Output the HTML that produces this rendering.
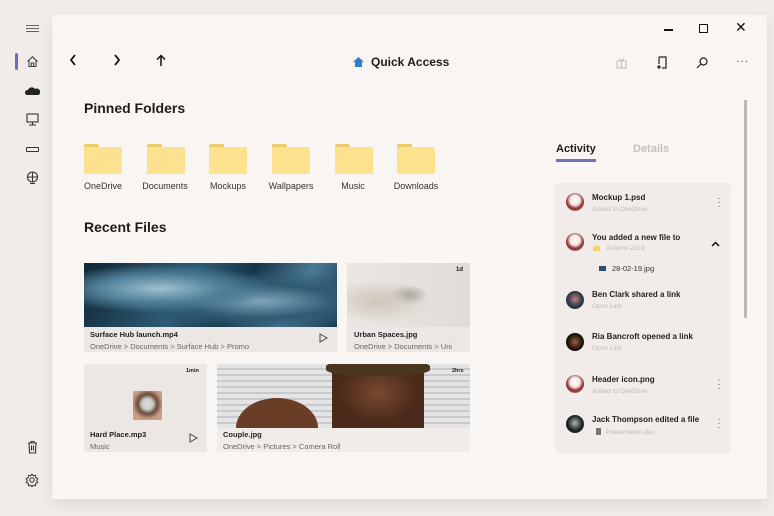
<!DOCTYPE html>
<html><head><meta charset="utf-8"><style>
*{margin:0;padding:0;box-sizing:border-box}
body{width:774px;height:516px;background:#f1ece9;font-family:"Liberation Sans",sans-serif;position:relative;overflow:hidden;color:#1c1c1c}
.abs{position:absolute}
.win{left:52px;top:15px;width:715px;height:484px;background:#f9f5f2;box-shadow:0 6px 14px rgba(0,0,0,.08)}
.fold{position:absolute;top:144px;width:38px;height:30px}
.fold .tab{position:absolute;left:0;top:0;width:15px;height:4px;background:#e9cc6c;border-radius:2px 2px 0 0}
.fold .body{position:absolute;left:0;top:3px;width:38px;height:27px;background:#fce28e;border-radius:1px}
.flab{position:absolute;top:181px;font-size:9px;color:#333;text-align:center;width:60px}
.card{position:absolute;background:#ece7e4}
.cap{position:absolute;font-size:7.5px}
.cap b{display:block;font-size:7.5px;color:#222}
.cap span{display:block;color:#666;margin-top:3px}
.av{position:absolute;left:566px;width:18px;height:18px;border-radius:50%}
.at{position:absolute;left:592px;font-size:8px;font-weight:bold;color:#222}
.as{position:absolute;left:592px;font-size:6.5px;color:#bbb}
.dots{position:absolute;left:717px;font-size:10px;color:#666;line-height:4px;width:4px;text-align:center}
</style></head><body>
<div class="abs win"></div>
<!-- sidebar -->
<div class="abs" style="left:26px;top:25px;width:13px;height:1px;background:#666;box-shadow:0 3px 0 #666,0 6px 0 #666"></div>
<div class="abs" style="left:15px;top:53px;width:3px;height:17px;background:#6b6fb5;border-radius:2px"></div>
<svg class="abs" style="left:26px;top:55px" width="13" height="13" viewBox="0 0 13 13" fill="none" stroke="#444" stroke-width="1.1"><path d="M1.5 6.5L6.5 1.8 11.5 6.5M3 5.5V11.5H10V5.5M5.3 11.5V8H7.7V11.5"/></svg>
<svg class="abs" style="left:25px;top:86px" width="15" height="9" viewBox="0 0 15 9"><path d="M2 9A2.5 2.5 0 0 1 3 4 4 4 0 0 1 10 3 3 3 0 0 1 13.5 9Z" fill="#222"/></svg>
<svg class="abs" style="left:26px;top:113px" width="13" height="13" viewBox="0 0 13 13" fill="none" stroke="#333" stroke-width="1.1"><rect x="1" y="1" width="11" height="8"/><path d="M6.5 9V11.5M3 12H10"/></svg>
<div class="abs" style="left:26px;top:147px;width:13px;height:5px;border:1.2px solid #333;border-radius:1px"></div>
<svg class="abs" style="left:26px;top:171px" width="13" height="14" viewBox="0 0 13 14" fill="none" stroke="#333" stroke-width="1.1"><circle cx="6.5" cy="6" r="5"/><path d="M1.5 6H11.5M6.5 1V11M4 12.5H9"/></svg>
<svg class="abs" style="left:27px;top:440px" width="11" height="14" viewBox="0 0 11 14" fill="none" stroke="#333" stroke-width="1.1"><path d="M1 3H10M4 3V1.5H7V3M2 3L2.5 13H8.5L9 3M4.5 5.5V10.5M6.5 5.5V10.5"/></svg>
<svg class="abs" style="left:25px;top:473px" width="14" height="14" viewBox="0 0 14 14" fill="none" stroke="#444" stroke-width="1.1"><circle cx="7" cy="7" r="2.2"/><path d="M7 1L8.2 2.8 10.5 2.3 10.7 4.5 12.8 5.6 11.6 7.5 12.8 9.4 10.7 10.5 10.5 12.7 8.2 12.2 7 14 5.8 12.2 3.5 12.7 3.3 10.5 1.2 9.4 2.4 7.5 1.2 5.6 3.3 4.5 3.5 2.3 5.8 2.8Z"/></svg>
<!-- nav -->
<svg class="abs" style="left:69px;top:54px" width="8" height="12" viewBox="0 0 8 12" fill="none" stroke="#111" stroke-width="1.8"><path d="M6 1L2 6 6 11"/></svg>
<svg class="abs" style="left:113px;top:54px" width="8" height="12" viewBox="0 0 8 12" fill="none" stroke="#111" stroke-width="1.8"><path d="M2 1L6 6 2 11"/></svg>
<svg class="abs" style="left:156px;top:54px" width="10" height="13" viewBox="0 0 10 13" fill="none" stroke="#111" stroke-width="1.5"><path d="M5 12V1.5M1 5.5L5 1.5 9 5.5"/></svg>
<svg class="abs" style="left:353px;top:57px" width="11" height="10" viewBox="0 0 11 10"><path d="M5.5 0L11 5H9V10H2V5H0Z" fill="#2a7fd4"/></svg>
<div class="abs" style="left:371px;top:55px;font-size:12px;font-weight:bold">Quick Access</div>
<!-- window controls -->
<div class="abs" style="left:664px;top:29px;width:9px;height:1.5px;background:#111"></div>
<div class="abs" style="left:699px;top:24px;width:9px;height:9px;border:1.5px solid #111"></div>
<div class="abs" style="left:735px;top:19px;font-size:14px;color:#111">✕</div>
<svg class="abs" style="left:616px;top:57px" width="11" height="12" viewBox="0 0 11 12" fill="none" stroke="#bbb" stroke-width="1"><rect x="1" y="4" width="9" height="7"/><path d="M5.5 4V11M3 1.5L5.5 4 8 1.5"/></svg>
<svg class="abs" style="left:656px;top:56px" width="12" height="14" viewBox="0 0 12 14" fill="none" stroke="#222" stroke-width="1.2"><path d="M3 1H10V12H6M3 1V8M1 11H5M3 9V13"/></svg>
<svg class="abs" style="left:696px;top:57px" width="12" height="12" viewBox="0 0 12 12" fill="none" stroke="#222" stroke-width="1.2"><circle cx="7.5" cy="4.5" r="3.5"/><path d="M5 7L1 11"/></svg>
<div class="abs" style="left:736px;top:56px;font-size:10px;color:#333;letter-spacing:1px">···</div>
<!-- pinned -->
<div class="abs" style="left:84px;top:100px;font-size:14px;font-weight:bold">Pinned Folders</div>
<div class="fold" style="left:84px"><div class="tab"></div><div class="body"></div></div>
<div class="fold" style="left:147px"><div class="tab"></div><div class="body"></div></div>
<div class="fold" style="left:209px"><div class="tab"></div><div class="body"></div></div>
<div class="fold" style="left:272px"><div class="tab"></div><div class="body"></div></div>
<div class="fold" style="left:335px"><div class="tab"></div><div class="body"></div></div>
<div class="fold" style="left:397px"><div class="tab"></div><div class="body"></div></div>
<div class="flab" style="left:73px">OneDrive</div>
<div class="flab" style="left:135px">Documents</div>
<div class="flab" style="left:198px">Mockups</div>
<div class="flab" style="left:261px">Wallpapers</div>
<div class="flab" style="left:323px">Music</div>
<div class="flab" style="left:386px">Downloads</div>
<div class="abs" style="left:84px;top:219px;font-size:14px;font-weight:bold">Recent Files</div>
<!-- cards -->
<div class="card" style="left:84px;top:263px;width:253px;height:89px"></div>
<div class="abs" style="left:84px;top:263px;width:253px;height:64px;background:radial-gradient(ellipse at 30% 40%,#9dc0d0 0,#4f7f98 25%,transparent 45%),radial-gradient(ellipse at 70% 60%,#7fa6bb 0,#2f5a72 30%,transparent 55%),linear-gradient(120deg,#0f2533,#2d5c75 40%,#163447 60%,#4a7a93 80%,#1a3a4e)"></div>
<div class="cap" style="left:90px;top:330px"><b>Surface Hub launch.mp4</b><span>OneDrive &gt; Documents &gt; Surface Hub &gt; Promo</span></div>
<svg class="abs" style="left:319px;top:333px" width="9" height="10" viewBox="0 0 9 10" fill="none" stroke="#444"><path d="M1 1L8 5 1 9Z"/></svg>
<div class="card" style="left:347px;top:263px;width:123px;height:89px"></div>
<div class="abs" style="left:347px;top:263px;width:123px;height:64px;background:radial-gradient(ellipse at 25% 60%,#cfc5bb 0,transparent 40%),radial-gradient(ellipse at 50% 50%,#9c9a98 0,transparent 22%),linear-gradient(90deg,#ebe6e2,#e0dbd7)"></div>
<div class="abs" style="left:456px;top:267px;font-size:6px;font-weight:bold">1d</div>
<div class="cap" style="left:354px;top:330px"><b>Urban Spaces.jpg</b><span>OneDrive &gt; Documents &gt; Uni</span></div>
<div class="card" style="left:84px;top:364px;width:123px;height:88px"></div>
<div class="abs" style="left:186px;top:368px;font-size:5.5px;font-weight:bold">1min</div>
<div class="abs" style="left:133px;top:391px;width:29px;height:29px;background:radial-gradient(circle at 50% 45%,#ddd 0,#ccc 25%,#6a4a3a 45%,#c79d85 70%);border-radius:2px"></div>
<div class="cap" style="left:90px;top:430px"><b>Hard Place.mp3</b><span>Music</span></div>
<svg class="abs" style="left:189px;top:433px" width="9" height="10" viewBox="0 0 9 10" fill="none" stroke="#444"><path d="M1 1L8 5 1 9Z"/></svg>
<div class="card" style="left:217px;top:364px;width:253px;height:88px;background:#f0ece9"></div>
<div class="abs" style="left:217px;top:364px;width:253px;height:64px;overflow:hidden;background:repeating-linear-gradient(180deg,#e5e4e4 0 4px,#c9c9cb 4px 6px)">
 <div class="abs" style="left:19px;top:34px;width:82px;height:60px;border-radius:50% 50% 0 0;background:#6a3e26"></div>
 <div class="abs" style="left:115px;top:0;width:92px;height:64px;background:radial-gradient(ellipse at 50% 45%,#7a4a30 0,#4a2a1a 60%)"></div>
 <div class="abs" style="left:109px;top:-4px;width:104px;height:16px;background:#4a3520;border-radius:40%"></div>
</div>
<div class="abs" style="left:452px;top:368px;font-size:5.5px;font-weight:bold">2hrs</div>
<div class="cap" style="left:223px;top:430px"><b>Couple.jpg</b><span>OneDrive &gt; Pictures &gt; Camera Roll</span></div>
<!-- right panel -->
<div class="abs" style="left:556px;top:143px;font-size:11px;font-weight:bold">Activity</div>
<div class="abs" style="left:556px;top:159px;width:40px;height:3px;background:#6e73b8"></div>
<div class="abs" style="left:633px;top:143px;font-size:11px;font-weight:bold;color:#c5c1be">Details</div>
<div class="abs" style="left:744px;top:100px;width:3px;height:218px;background:#bdb8b5"></div>
<div class="abs" style="left:555px;top:183px;width:176px;height:270px;background:#f1ece9;border-radius:3px"></div>
<div class="av" style="top:193px;background:radial-gradient(circle at 50% 40%,#fff 0,#f4e6e6 35%,#8a2a2a 60%,#d9c0c0)"></div>
<div class="at" style="top:193px">Mockup 1.psd</div><div class="as" style="top:206px">Added to OneDrive</div>
<div class="dots" style="top:197px">·<br>·<br>·</div>
<div class="av" style="top:233px;background:radial-gradient(circle at 50% 40%,#fff 0,#f4e6e6 35%,#8a2a2a 60%,#d9c0c0)"></div>
<div class="at" style="top:233px">You added a new file to</div>
<div class="abs" style="left:593px;top:246px;width:7px;height:5px;background:#f5d36a"></div>
<div class="as" style="left:606px;top:245px">Autumn 2019</div>
<svg class="abs" style="left:711px;top:241px" width="9" height="6" viewBox="0 0 9 6" fill="none" stroke="#111" stroke-width="1.5"><path d="M1 5L4.5 1.5 8 5"/></svg>
<div class="abs" style="left:599px;top:266px;width:7px;height:5px;background:#2c4a7a"></div>
<div class="abs" style="left:612px;top:264px;font-size:7.5px;color:#333">28-02-19.jpg</div>
<div class="av" style="top:291px;background:radial-gradient(circle at 50% 45%,#c28080 0,#2a3a48 55%)"></div>
<div class="at" style="top:290px">Ben Clark shared a link</div><div class="as" style="top:303px">Open Link</div>
<div class="av" style="top:333px;background:radial-gradient(circle at 50% 50%,#a0603a 0,#1a0f0a 60%)"></div>
<div class="at" style="top:332px">Ria Bancroft opened a link</div><div class="as" style="top:345px">Open Link</div>
<div class="av" style="top:375px;background:radial-gradient(circle at 50% 40%,#fff 0,#f4e6e6 35%,#8a2a2a 60%,#d9c0c0)"></div>
<div class="at" style="top:375px">Header icon.png</div><div class="as" style="top:388px">Added to OneDrive</div>
<div class="dots" style="top:379px">·<br>·<br>·</div>
<div class="av" style="top:415px;background:radial-gradient(circle at 50% 45%,#b0b8b0 0,#1a2420 55%)"></div>
<div class="at" style="top:415px">Jack Thompson edited a file</div>
<div class="abs" style="left:596px;top:428px;width:5px;height:7px;background:#777"></div>
<div class="as" style="left:606px;top:429px">Presentation.doc</div>
<div class="dots" style="top:418px">·<br>·<br>·</div>
</body></html>
